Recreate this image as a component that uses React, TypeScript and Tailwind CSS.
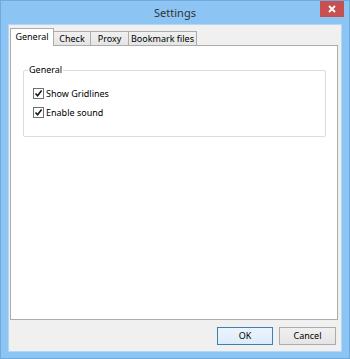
import React from "react";

function CheckRow({ label }: { label: string }) {
  return (
    <div className="h-[19px] flex items-center">
      <div className="w-[11px] h-[11px] border border-[#707070] bg-white flex items-center justify-center">
        <svg width="9" height="9" viewBox="0 0 9 9">
          <path d="M1.5 4.5 L3.6 6.8 L7.6 1.6" fill="none" stroke="#1a1a1a" strokeWidth="1.6" />
        </svg>
      </div>
      <span className="ml-[2px] text-[9px] text-black leading-none">{label}</span>
    </div>
  );
}

export default function App() {
  const tabs = ["Check", "Proxy", "Bookmark files"];
  const tabW: Record<string, string> = {
    Check: "w-[38px]",
    Proxy: "w-[39px]",
    "Bookmark files": "w-[69px]",
  };
  return (
    <div
      className="w-[350px] h-[359px] bg-[#8cc4f4] border border-[#6fa9de] flex flex-col"
      style={{ fontFamily: '"Noto Sans", "Liberation Sans", sans-serif' }}
    >
      <div className="h-[23px] relative flex items-center justify-center">
        <span className="text-[11px] text-[#333333] leading-none">Settings</span>
        <div className="absolute right-[5px] top-0 w-[24px] h-[16px] bg-[#c75050] flex items-center justify-center">
          <svg width="8" height="8" viewBox="0 0 8 8">
            <path d="M1 1 L7 7 M7 1 L1 7" stroke="#ffffff" strokeWidth="1.8" />
          </svg>
        </div>
      </div>
      <div className="mx-[7px] mb-[6px] flex-1 bg-[#f0f0f0] border border-[#b4d6f5] flex flex-col pt-[3px] pl-[1px] pr-[3px]">
        <div className="h-[17px] flex items-end">
          <div className="relative z-10 -mb-px w-[44px] h-[18px] bg-white border border-b-0 border-[#acacac] flex items-start justify-center pt-[3px]">
            <span className="text-[9px] text-black leading-none">General</span>
          </div>
          {tabs.map((t) => (
            <div
              key={t}
              className={`-ml-px ${tabW[t]} h-[14px] bg-gradient-to-b from-[#f0f0f0] to-[#e5e5e5] border border-b-0 border-[#acacac] flex items-center justify-center`}
            >
              <span className="text-[9px] text-black leading-none">{t}</span>
            </div>
          ))}
        </div>
        <div className="flex-1 bg-white border border-[#acacac] flex flex-col">
          <div className="relative mt-[24px] ml-[12px] mr-[11px] h-[67px] border border-[#dcdcdc] rounded-[2px] pt-[13px] pl-[9px]">
            <span className="absolute -top-[6px] left-[4px] bg-white px-[1px] text-[9px] text-black leading-none">
              General
            </span>
            <CheckRow label="Show Gridlines" />
            <CheckRow label="Enable sound" />
          </div>
        </div>
        <div className="h-[31px] flex items-center justify-end gap-[6px] pr-[2px]">
          <button className="w-[56px] h-[18px] border border-[#3c7fb1] bg-gradient-to-b from-[#ecf4fc] to-[#dcecfc] text-[9px] text-black leading-none">
            OK
          </button>
          <button className="w-[57px] h-[18px] border border-[#acacac] bg-gradient-to-b from-[#f0f0f0] to-[#e5e5e5] text-[9px] text-black leading-none">
            Cancel
          </button>
        </div>
      </div>
    </div>
  );
}
